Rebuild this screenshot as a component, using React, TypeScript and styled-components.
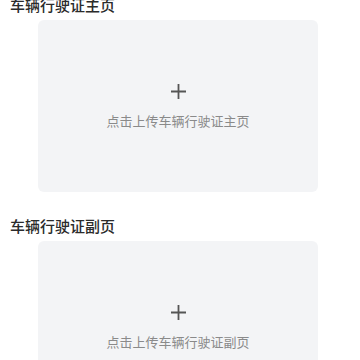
import styled, { createGlobalStyle } from 'styled-components';

const GlobalStyle = createGlobalStyle`
  html, body {
    margin: 0;
    padding: 0;
    background: #ffffff;
    overflow: hidden;
  }
  body {
    font-family: "Noto Sans CJK SC", "Noto Sans", sans-serif;
  }
`;

interface UploadSectionInfo {
  title: string;
  hint: string;
}

const Page = styled.div`
  display: flex;
  flex-direction: column;
  gap: 24px;
  margin-top: -5px;
  padding: 0 10px;
`;

const Section = styled.section`
  display: flex;
  flex-direction: column;
  gap: 5px;
`;

const Title = styled.h3`
  margin: 0;
  font-size: 15px;
  line-height: 20px;
  font-weight: 500;
  color: #2b2b2b;
`;

const UploadCard = styled.div`
  display: flex;
  flex-direction: column;
  align-items: center;
  box-sizing: border-box;
  width: 280px;
  height: 172px;
  margin-left: 28px;
  padding-top: 63px;
  gap: 12px;
  background-color: #f3f4f6;
  border-radius: 6px;
  cursor: pointer;
`;

const PlusIcon = styled.svg`
  width: 17px;
  height: 17px;
  display: block;
`;

const HintText = styled.p`
  margin: 0;
  font-size: 13px;
  line-height: 18px;
  color: #8a8a8a;
`;

const UploadSection = ({ title, hint }: UploadSectionInfo) => {
  return (
    <Section>
      <Title>{title}</Title>
      <UploadCard>
        <PlusIcon viewBox="0 0 17 17">
          <path d="M8.5 1v15M1 8.5h15" stroke="#555555" strokeWidth="1.8" fill="none" />
        </PlusIcon>
        <HintText>{hint}</HintText>
      </UploadCard>
    </Section>
  );
};

const App = () => {
  return (
    <>
      <GlobalStyle />
      <Page>
        <UploadSection title="车辆行驶证主页" hint="点击上传车辆行驶证主页" />
        <UploadSection title="车辆行驶证副页" hint="点击上传车辆行驶证副页" />
      </Page>
    </>
  );
};

export default App;
